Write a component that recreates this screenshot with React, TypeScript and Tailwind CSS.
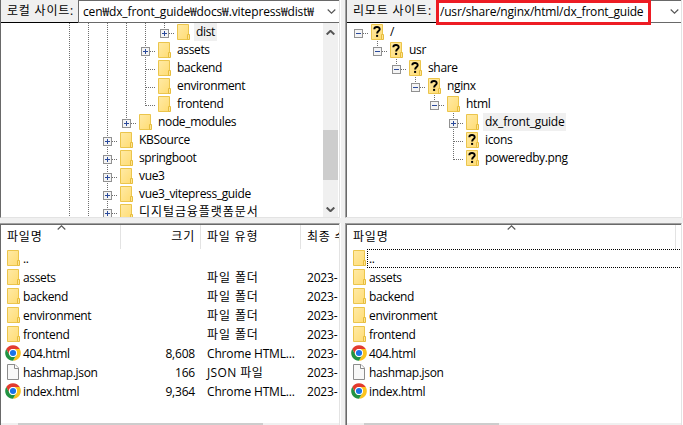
import type { ReactNode } from 'react';

type Cell = ' ' | '|' | '+' | '*' | '-' | 'r' | 't' | 'L';
type Kind = 'folder' | 'unknown' | 'chrome' | 'file';
type TreeItem = { guides: Cell[]; kind: Kind; name: string; selected?: boolean; tracking?: string };
type FileItem = { kind: Kind; name: string; size?: string; type?: string; date?: string };

/** One 19px step of the dotted tree lines. "r" is a root node, "t" a tee, "L" the last child, "*" a closed last child. */
function Guide({ cell }: { cell: Cell }) {
  const boxed = cell === '+' || cell === '*' || cell === '-' || cell === 'r';
  const top = cell !== ' ' && cell !== 'r';
  const bottom = cell === '|' || cell === '+' || cell === 't';
  return (
    <svg className="block h-[18px] w-[19px] shrink-0" viewBox="0 0 19 18" shapeRendering="crispEdges">
      <g stroke="#6e6e6e" strokeDasharray="1 1" fill="none">
        {top && <path d={bottom ? 'M9.5 0V18' : 'M9.5 0V11'} />}
        {cell !== ' ' && cell !== '|' && <path d="M10 10.5H19" />}
      </g>
      {boxed && (
        <g>
          <rect x="5.5" y="6.5" width="8" height="8" fill="#f4f4f4" stroke="#919191" />
          <path d="M7 10.5H12" stroke="#2b4a9b" />
          {(cell === '+' || cell === '*') && <path d="M9.5 8V13" stroke="#2b4a9b" />}
        </g>
      )}
    </svg>
  );
}

function Icon({ kind }: { kind: Kind }) {
  if (kind === 'chrome') {
    return (
      <svg className="block size-4 shrink-0" viewBox="0 0 48 48">
        <circle cx="24" cy="24" r="23.5" fill="#fff" />
        <path d="M3.6 12.3A23.5 23.5 0 0 1 44.4 12.3H24A11.8 11.8 0 0 0 13.8 30Z" fill="#e33b2e" />
        <path d="M44.4 12.3A23.5 23.5 0 0 1 24 47.5L34.2 30A11.8 11.8 0 0 0 24 12.3Z" fill="#fcc31e" />
        <path d="M24 47.5A23.5 23.5 0 0 1 3.6 12.3L13.8 30A11.8 11.8 0 0 0 34.2 30Z" fill="#229342" />
        <circle cx="24" cy="24" r="11.8" fill="#fff" />
        <circle cx="24" cy="24" r="9.2" fill="#1a73e8" />
      </svg>
    );
  }
  if (kind === 'file') {
    return (
      <svg className="block size-4 shrink-0" viewBox="0 0 16 16">
        <path d="M2.5 .5H10L13.5 4V15.5H2.5Z" fill="#f8f8f8" stroke="#8c8c8c" />
        <path d="M9.5 .5V4.5H13.5" fill="#fff" stroke="#8c8c8c" />
      </svg>
    );
  }
  return (
    <svg className="block size-4 shrink-0" viewBox="0 0 16 16">
      <defs>
        <linearGradient id="paper" x1="0" y1="0" x2="1" y2="1">
          <stop offset="0" stopColor="#ffeaa6" />
          <stop offset="1" stopColor="#ffdc73" />
        </linearGradient>
      </defs>
      <path d="M.5 .5H11.5V15.5H.5Z" fill="url(#paper)" stroke="#ebc54c" />
      <path d="M10.5 10.5H12.5V15.5H10.5Z" fill="#ffe493" stroke="#e6bd3d" />
      {kind === 'unknown' && (
        <g>
          <path d="M3.3 5.3C3.3 2.2 8.7 2.2 8.7 5.2C8.7 7 6.1 7.1 6.1 9.5" fill="none" stroke="#000" strokeWidth="1.9" />
          <rect x="5.1" y="10.9" width="2" height="2" />
        </g>
      )}
    </svg>
  );
}

const localTree: TreeItem[] = [
  { guides: ['|', '|', '|', '|', '|', '*'], kind: 'folder', name: 'dist', selected: true },
  { guides: ['|', '|', '|', '|', '+'], kind: 'folder', name: 'assets' },
  { guides: ['|', '|', '|', '|', 't'], kind: 'folder', name: 'backend' },
  { guides: ['|', '|', '|', '|', 't'], kind: 'folder', name: 'environment' },
  { guides: ['|', '|', '|', '|', 'L'], kind: 'folder', name: 'frontend' },
  { guides: ['|', '|', '|', '*'], kind: 'folder', name: 'node_modules' },
  { guides: ['|', '|', '+'], kind: 'folder', name: 'KBSource' },
  { guides: ['|', '|', '+'], kind: 'folder', name: 'springboot' },
  { guides: ['|', '|', '+'], kind: 'folder', name: 'vue3' },
  { guides: ['|', '|', '+'], kind: 'folder', name: 'vue3_vitepress_guide' },
  { guides: ['|', '|', '+'], kind: 'folder', name: '디지털금융플랫폼문서', tracking: 'tracking-[0.92px]' },
];

const remoteTree: TreeItem[] = [
  { guides: ['r'], kind: 'unknown', name: '/' },
  { guides: [' ', '-'], kind: 'unknown', name: 'usr' },
  { guides: [' ', ' ', '-'], kind: 'unknown', name: 'share' },
  { guides: [' ', ' ', ' ', '-'], kind: 'unknown', name: 'nginx' },
  { guides: [' ', ' ', ' ', ' ', '-'], kind: 'folder', name: 'html' },
  { guides: [' ', ' ', ' ', ' ', ' ', '+'], kind: 'folder', name: 'dx_front_guide', selected: true, tracking: 'tracking-[-0.25px]' },
  { guides: [' ', ' ', ' ', ' ', ' ', 't'], kind: 'unknown', name: 'icons' },
  { guides: [' ', ' ', ' ', ' ', ' ', 'L'], kind: 'unknown', name: 'poweredby.png' },
];

const files: FileItem[] = [
  { kind: 'folder', name: '..' },
  { kind: 'folder', name: 'assets', type: '파일 폴더', date: '2023-' },
  { kind: 'folder', name: 'backend', type: '파일 폴더', date: '2023-' },
  { kind: 'folder', name: 'environment', type: '파일 폴더', date: '2023-' },
  { kind: 'folder', name: 'frontend', type: '파일 폴더', date: '2023-' },
  { kind: 'chrome', name: '404.html', size: '8,608', type: 'Chrome HTML...', date: '2023-' },
  { kind: 'file', name: 'hashmap.json', size: '166', type: 'JSON 파일', date: '2023-' },
  { kind: 'chrome', name: 'index.html', size: '9,364', type: 'Chrome HTML...', date: '2023-' },
];

const typeTracking: Record<string, string> = {
  '파일 폴더': 'tracking-[0.9px]',
  'JSON 파일': 'tracking-[0.4px]',
  'Chrome HTML...': 'tracking-[-0.15px]',
};

function Tree({ items }: { items: TreeItem[] }) {
  return (
    <div className="min-w-0 flex-1 overflow-hidden">
      {items.map((item) => (
        <div key={item.name} className="flex h-[18px]">
          {item.guides.map((cell, i) => (
            <Guide key={i} cell={cell} />
          ))}
          <div className="pt-px pl-[3px]">
            <Icon kind={item.kind} />
          </div>
          <span
            className={`ml-px h-[18px] px-0.5 leading-[18px] ${item.tracking ?? 'tracking-[-0.35px]'} ${item.selected ? 'bg-[#f0f0f0]' : ''}`}
          >
            {item.name}
          </span>
        </div>
      ))}
    </div>
  );
}

function Chevron({ up = false, bold = false }: { up?: boolean; bold?: boolean }) {
  return (
    <svg className="block h-[5px] w-[9px] shrink-0" viewBox="0 0 9 5">
      <path d={up ? 'M.7 4.5L4.5 .8L8.3 4.5' : 'M.7 .5L4.5 4.2L8.3 .5'} fill="none" stroke="#555" strokeWidth={bold ? 2 : 1.1} />
    </svg>
  );
}

function SiteBar({ label, width, children }: { label: string; width: string; children: ReactNode }) {
  return (
    <div className="flex h-[23px] shrink-0">
      <div className={`shrink-0 border-b border-black bg-[#f0f0f0] pl-1.5 leading-[21px] tracking-[0.8px] ${width}`}>{label}</div>
      {children}
    </div>
  );
}

function HeaderCell({ className, children }: { className: string; children?: ReactNode }) {
  return (
    <div className={`h-6 shrink-0 overflow-hidden border-r border-[#e3e3e3] leading-[23px] tracking-[0.8px] ${className}`}>{children}</div>
  );
}

function FileName({ item }: { item: FileItem }) {
  const inset = item.kind === 'chrome' || item.kind === 'file' ? 'pl-1 pr-0.5' : 'pl-1.5';
  return (
    <>
      <div className={`w-[22px] shrink-0 pt-px ${inset}`}>
        <Icon kind={item.kind} />
      </div>
      <span className="leading-5 tracking-[-0.35px]">{item.name}</span>
    </>
  );
}

export default function App() {
  return (
    <div className="flex h-[425px] w-[683px] overflow-hidden bg-white font-['Open_Sans','Noto_Sans_CJK_KR',sans-serif] text-[12px] tracking-[-0.2px] whitespace-nowrap text-black">
      <div className="flex w-[340px] shrink-0 flex-col">
        <section className="flex h-[218px] flex-col border-r border-b border-l border-r-[#e3e3e3] border-b-[#e3e3e3] border-l-[#696969]">
          <SiteBar label="로컬 사이트:" width="w-[77px]">
            <div className="flex min-w-0 flex-1 items-center border-y border-l border-[#696969] bg-white pl-1">
              <span className="w-[244px] shrink-0 overflow-hidden leading-5 tracking-[-0.13px]">cen₩dx_front_guide₩docs₩.vitepress₩dist₩</span>
              <Chevron />
            </div>
          </SiteBar>
          <div className="flex min-h-0 flex-1">
            <div className="flex min-w-0 flex-1 pl-[59px]">
              <Tree items={localTree} />
            </div>
            <div className="flex w-[15px] shrink-0 flex-col items-center bg-[#f0f0f0]">
              <div className="pt-[7px]">
                <Chevron up bold />
              </div>
              <div className="mt-[95px] h-[50px] w-full bg-[#cdcdcd]" />
              <div className="pt-[27px]">
                <Chevron bold />
              </div>
            </div>
            <div className="w-px shrink-0 bg-white" />
          </div>
        </section>
        <div className="h-[5px] shrink-0 bg-[#f0f0f0]" />
        <section className="flex min-h-0 flex-1 flex-col border-t border-r border-t-[#a0a0a0] border-r-[#e3e3e3]">
          <div className="flex min-h-0 flex-1 flex-col border-t border-l border-[#696969]">
            <div className="flex overflow-hidden">
              <HeaderCell className="flex w-[120px] pl-1.5">
                <span className="w-[50px]">파일명</span>
                <Chevron up />
              </HeaderCell>
              <HeaderCell className="w-20 pr-[5px] text-right">크기</HeaderCell>
              <HeaderCell className="w-[100px] pl-1.5">파일 유형</HeaderCell>
              <span className="pl-1.5 leading-[23px] tracking-[0.8px]">최종 수정</span>
            </div>
            {files.map((item) => (
              <div key={item.name} className="flex h-[19px] shrink-0 overflow-hidden leading-5">
                <div className="flex w-[120px] shrink-0">
                  <FileName item={item} />
                </div>
                <span className="w-[74px] shrink-0 text-right">{item.size}</span>
                <span className={`ml-3 w-[100px] shrink-0 ${item.type ? typeTracking[item.type] : ''}`}>{item.type}</span>
                <span>{item.date}</span>
              </div>
            ))}
            <div className="mt-auto flex h-0.5 shrink-0 bg-[#f0f0f0] pl-[17px]">
              <div className="w-[245px] bg-[#cdcdcd]" />
            </div>
          </div>
        </section>
      </div>

      <div className="flex w-[5px] shrink-0 flex-col">
        <div className="h-[218px] border-l border-white bg-[#f0f0f0]" />
        <div className="h-[5px] bg-[#f0f0f0]" />
        <div className="flex-1 border-l border-white bg-[#f0f0f0]" />
      </div>

      <div className="flex w-[337px] shrink-0 flex-col">
        <section className="h-[218px] border-r border-b border-l border-r-[#e3e3e3] border-b-[#e3e3e3] border-l-[#a0a0a0]">
          <div className="flex h-full flex-col border-l border-[#696969]">
            <SiteBar label="리모트 사이트:" width="w-[89px]">
              <div className="relative flex min-w-0 flex-1 items-center border-y border-[#696969] bg-white pl-1">
                <div className="absolute -top-px left-0 h-[25px] w-[215px] border-3 border-[#ed1c24]" />
                <span className="w-[230px] shrink-0 leading-5">/usr/share/nginx/html/dx_front_guide</span>
                <Chevron />
              </div>
            </SiteBar>
            <div className="flex pl-0.5">
              <Tree items={remoteTree} />
            </div>
          </div>
        </section>
        <div className="h-[5px] shrink-0 bg-[#f0f0f0]" />
        <section className="flex min-h-0 flex-1 flex-col border-t border-r border-l border-t-[#a0a0a0] border-r-[#e3e3e3] border-l-[#a0a0a0]">
          <div className="flex min-h-0 flex-1 flex-col border-t border-l border-[#696969]">
            <HeaderCell className="flex w-[329px] pl-1.5">
              <span className="w-[154px]">파일명</span>
              <Chevron up />
            </HeaderCell>
            {files.map((item) => (
              <div key={item.name} className="relative flex h-[19px] shrink-0">
                <FileName item={item} />
                {item.name === '..' && (
                  <svg className="absolute top-0 left-5 h-[19px] w-[314px]" viewBox="0 0 314 19" shapeRendering="crispEdges">
                    <path d="M0 .5H314M0 18.5H314M.5 0V19" stroke="#000" strokeDasharray="1 1" />
                  </svg>
                )}
              </div>
            ))}
            <div className="mt-auto flex h-0.5 shrink-0 bg-[#f0f0f0] pl-[17px]">
              <div className="w-[135px] bg-[#cdcdcd]" />
            </div>
          </div>
        </section>
      </div>
      <div className="flex flex-1 flex-col pt-[218px]">
        <div className="h-[5px] bg-[#f0f0f0]" />
      </div>
    </div>
  );
}
